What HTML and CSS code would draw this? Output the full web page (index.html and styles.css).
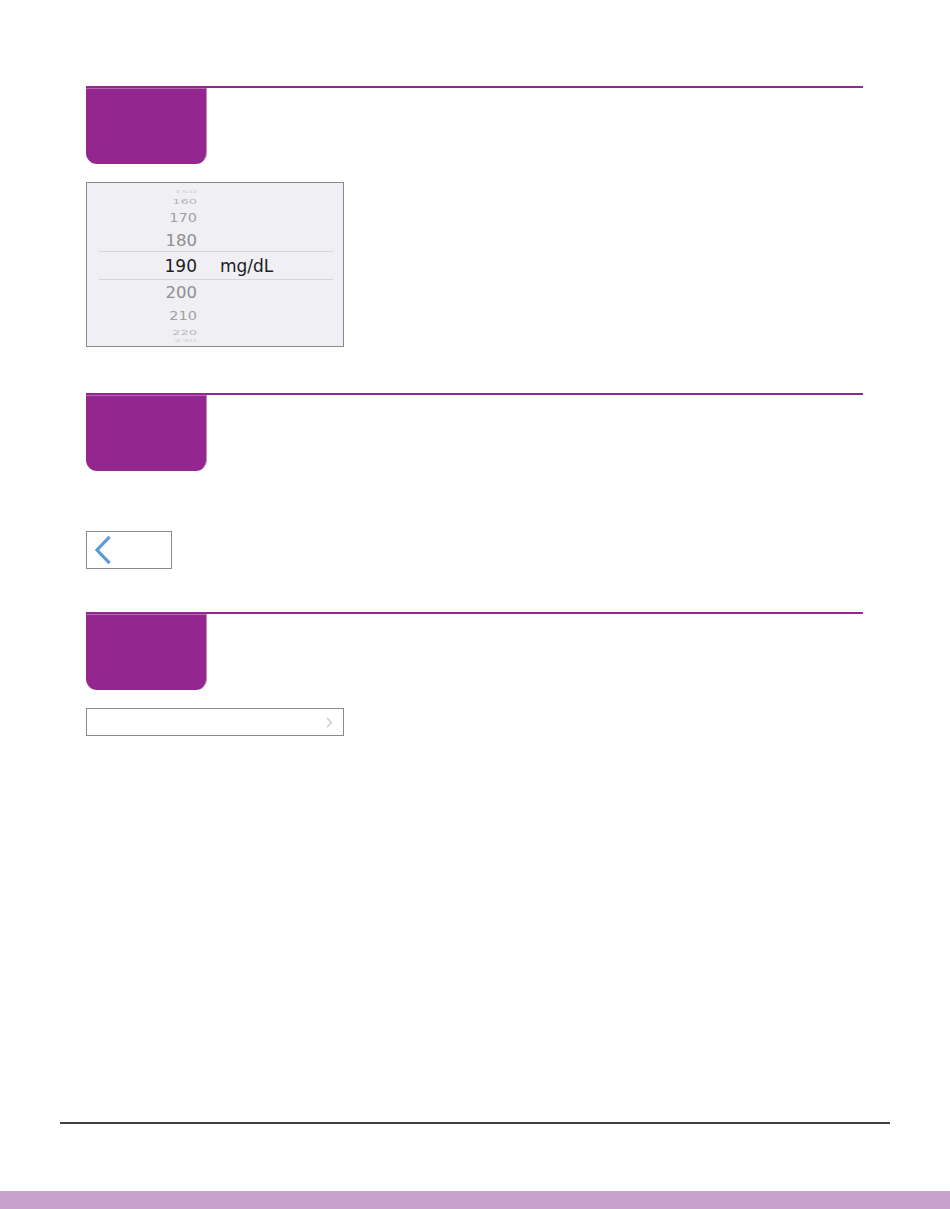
FILE: index.html
```html
<!DOCTYPE html>
<html lang="en">
<head>
  <meta charset="UTF-8" />
  <meta name="viewport" content="width=device-width,initial-scale=1.0"/>
  <title>Settings steps</title>
  <link rel="stylesheet" href="styles.css">
</head>
<body>
  <main class="page">
    <section class="step">
      <div class="step-head"><div class="tab"></div></div>
      <div class="picker">
        <div class="wheel-row r4"><span class="num">150</span></div>
        <div class="wheel-row r3"><span class="num">160</span></div>
        <div class="wheel-row r2"><span class="num">170</span></div>
        <div class="wheel-row r1"><span class="num">180</span></div>
        <div class="wheel-row selected"><span class="num">190</span><span class="unit">mg/dL</span></div>
        <div class="wheel-row r1"><span class="num">200</span></div>
        <div class="wheel-row r2"><span class="num">210</span></div>
        <div class="wheel-row r3"><span class="num">220</span></div>
        <div class="wheel-row r4"><span class="num">230</span></div>
      </div>
    </section>

    <section class="step step-back">
      <div class="step-head"><div class="tab"></div></div>
      <div class="back-btn">
        <svg width="18" height="28" viewBox="0 0 18 28">
          <path d="M14.5 2 L3 14 L14.5 26" fill="none" stroke="#5b9bd5" stroke-width="3.2" stroke-linecap="square"/>
        </svg>
      </div>
    </section>

    <section class="step">
      <div class="step-head"><div class="tab"></div></div>
      <div class="list-row">
        <svg width="7" height="11" viewBox="0 0 7 11">
          <path d="M1 1 L5.5 5.5 L1 10" fill="none" stroke="#c7c7cc" stroke-width="1.3"/>
        </svg>
      </div>
    </section>
  </main>

  <footer class="footer">
    <div class="rule"></div>
    <div class="band"></div>
  </footer>
</body>
</html>
```

FILE: styles.css
```css
:root {
  --purple: #93278f;
  --purple-edge: #c48fc1;
  --box-border: #8a8a8a;
  --wheel-bg: #f0eff4;
  --wheel-text: #8e8e93;
  --blue: #5b9bd5;
  --band: #c8a0ca;
}
* { box-sizing: border-box; margin: 0; padding: 0; }
body {
  font-family: "Liberation Sans", Arial, sans-serif;
  background: #fff;
  color: #1a1a1a;
  min-height: 100vh;
  display: flex;
  flex-direction: column;
}
.page {
  flex: 1;
  padding: 86px 87px 0 86px;
}

/* step header: purple rule with a tab hanging under it */
.step-head {
  border-top: 2px solid var(--purple);
}
.tab {
  width: 121px;
  height: 76px;
  background: var(--purple);
  border-right: 1px solid var(--purple-edge);
  border-top: 1px solid #b565b1;
  border-radius: 0 0 11px 11px;
}

.step + .step { margin-top: 46px; }
.step-back + .step { margin-top: 43px; }

/* picker wheel */
.picker {
  margin-top: 18px;
  width: 258px;
  height: 165px;
  border: 1px solid var(--box-border);
  background: var(--wheel-bg);
  padding: 5px 10px 0 12px;
  display: flex;
  flex-direction: column;
  font-family: "DejaVu Sans", sans-serif;
}
.wheel-row {
  display: flex;
  align-items: center;
  color: var(--wheel-text);
  font-size: 16px;
}
.wheel-row .num {
  width: 98px;
  text-align: right;
  display: inline-block;
  transform-origin: right center;
}
.wheel-row.r4 { height: 8px; font-size: 12px; color: #d0d0d4; }
.wheel-row.r4 .num { transform: scaleY(0.3); }
.wheel-row.r3 { height: 10px; font-size: 13px; color: #b4b4b8; }
.wheel-row.r3 .num { transform: scaleY(0.6); }
.wheel-row.r2 { height: 23px; font-size: 14.5px; color: #a0a0a5; }
.wheel-row.r2 .num { transform: scaleY(0.85); }
.wheel-row.r1 { height: 22px; font-size: 16.5px; }
.wheel-row.r1 .num { transform: scaleY(0.93); }
.wheel-row.selected {
  height: 29px;
  border-top: 1px solid #d6d6da;
  border-bottom: 1px solid #d6d6da;
  color: #1c1c1e;
  font-size: 17px;
}
.wheel-row.selected + .wheel-row { height: 24px; }
.wheel-row .unit { margin-left: 23px; }

/* back button */
.back-btn {
  margin-top: 60px;
  width: 86px;
  height: 38px;
  border: 1px solid var(--box-border);
  display: flex;
  align-items: center;
  padding-left: 7px;
}

/* list row with disclosure chevron */
.list-row {
  margin-top: 18px;
  width: 258px;
  height: 28px;
  border: 1px solid var(--box-border);
  display: flex;
  align-items: center;
  justify-content: flex-end;
  padding-right: 10px;
}

.footer { padding-top: 40px; }
.footer .rule {
  margin: 0 60px;
  border-top: 2px solid #404040;
}
.footer .band {
  margin-top: 67px;
  height: 18px;
  background: var(--band);
}
```
